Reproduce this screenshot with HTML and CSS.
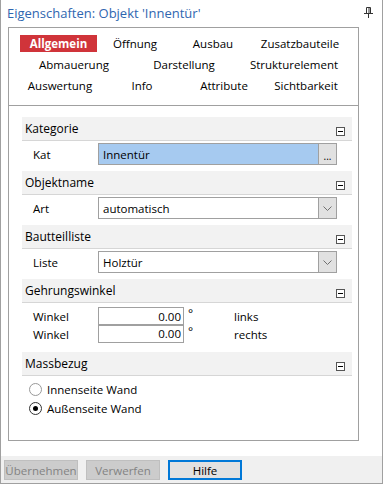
FILE: index.html
```html
<!DOCTYPE html>
<html lang="de">
<head>
<meta charset="utf-8">
<title>Eigenschaften</title>
<link rel="stylesheet" href="styles.css">
</head>
<body>
<div class="window">
  <div class="titlebar">
    <span class="title">Eigenschaften: Objekt 'Innentür'</span>
    <svg class="pin" width="9" height="11" viewBox="0 0 9 11">
      <path d="M2.5 0.5h4v6h-4z" fill="none" stroke="#333" stroke-width="1"/>
      <path d="M5 0.5v6" stroke="#333" stroke-width="1"/>
      <path d="M0 6.5h9" stroke="#333" stroke-width="1"/>
      <path d="M4.5 7v4" stroke="#333" stroke-width="1"/>
    </svg>
  </div>
  <div class="panel">
    <div class="tabs">
      <div class="tabrow r1">
        <span class="tab active">Allgemein</span>
        <span class="tab">Öffnung</span>
        <span class="tab">Ausbau</span>
        <span class="tab">Zusatzbauteile</span>
      </div>
      <div class="tabrow r2">
        <span class="tab">Abmauerung</span>
        <span class="tab">Darstellung</span>
        <span class="tab">Strukturelement</span>
      </div>
      <div class="tabrow r3">
        <span class="tab">Auswertung</span>
        <span class="tab">Info</span>
        <span class="tab">Attribute</span>
        <span class="tab">Sichtbarkeit</span>
      </div>
    </div>
    <div class="content">
      <div class="section">
        <div class="sechead"><span>Kategorie</span><i class="collapse"></i></div>
        <div class="row">
          <span class="label">Kat</span>
          <div class="field sel"><span class="val">Innentür</span><span class="btn dots">...</span></div>
        </div>
      </div>
      <div class="section">
        <div class="sechead"><span>Objektname</span><i class="collapse"></i></div>
        <div class="row">
          <span class="label">Art</span>
          <div class="field"><span class="val">automatisch</span><span class="btn"><svg width="9" height="5" viewBox="0 0 9 5"><path d="M0.5 0.5l4 4 4-4" fill="none" stroke="#707070" stroke-width="1"/></svg></span></div>
        </div>
      </div>
      <div class="section">
        <div class="sechead"><span>Bautteilliste</span><i class="collapse"></i></div>
        <div class="row">
          <span class="label">Liste</span>
          <div class="field"><span class="val">Holztür</span><span class="btn"><svg width="9" height="5" viewBox="0 0 9 5"><path d="M0.5 0.5l4 4 4-4" fill="none" stroke="#707070" stroke-width="1"/></svg></span></div>
        </div>
      </div>
      <div class="section">
        <div class="sechead"><span>Gehrungswinkel</span><i class="collapse"></i></div>
        <div class="angles">
          <div class="arow">
            <span class="label">Winkel</span>
            <span class="num">0.00</span>
            <span class="deg">°</span>
            <span class="side">links</span>
          </div>
          <div class="arow second">
            <span class="label">Winkel</span>
            <span class="num">0.00</span>
            <span class="deg">°</span>
            <span class="side">rechts</span>
          </div>
        </div>
      </div>
      <div class="section">
        <div class="sechead"><span>Massbezug</span><i class="collapse"></i></div>
        <div class="radios">
          <label class="radio"><span class="circle"></span>Innenseite Wand</label>
          <label class="radio"><span class="circle on"></span>Außenseite Wand</label>
        </div>
      </div>
    </div>
  </div>
  <div class="footer">
    <span class="button disabled">Übernehmen</span>
    <span class="button disabled">Verwerfen</span>
    <span class="button focus">Hilfe</span>
  </div>
</div>
</body>
</html>
```
FILE: styles.css
```css
* { box-sizing: border-box; }
html, body { margin: 0; padding: 0; background: #fff; }
body {
  font-family: "Open Sans", "Noto Sans", sans-serif;
  font-size: 11.5px;
  color: #000;
}
.window {
  width: 383px;
  height: 484px;
  border-left: 1px solid #a0a0a0;
  border-right: 1px solid #a0a0a0;
  border-bottom: 1px solid #a0a0a0;
  display: flex;
  flex-direction: column;
}
.titlebar {
  height: 27px;
  display: flex;
  align-items: center;
  justify-content: space-between;
  padding: 0 9px 1px 6px;
}
.title {
  color: #2f66b0;
  font-size: 13px;
}
.pin { margin-top: -2px; }
.panel {
  margin: 0 23px 0 7px;
  height: 414px;
  border: 1px solid #a0a0a0;
}
.tabs {
  height: 78px;
  border-bottom: 1px solid #a0a0a0;
  padding-top: 5px;
}
.tabrow {
  display: grid;
  height: 21px;
  align-items: center;
  justify-items: center;
}
.r1 { grid-template-columns: 77px 76px 80px 94px; padding-left: 11px; }
.r2 { grid-template-columns: 110px 110px 110px; padding-left: 10px; }
.r3 { grid-template-columns: 82px 82px 82px 82px; padding-left: 10px; }
.tab { white-space: nowrap; }
.tab.active {
  width: 77px;
  height: 17px;
  line-height: 17px;
  background: #d0343a;
  color: #fff;
  font-weight: bold;
  text-align: center;
}
.content {
  padding: 11px 6px 0 13px;
}
.sechead {
  height: 24px;
  background: #f2f2f2;
  border-bottom: 1px solid #d6d6d6;
  display: flex;
  justify-content: space-between;
  align-items: center;
  padding: 0 7px 0 3px;
  font-size: 12px;
}
.collapse {
  align-self: flex-end;
  margin-bottom: 4px;
  width: 9px;
  height: 9px;
  border: 1px solid #555;
  background: #fff;
  position: relative;
}
.collapse::after {
  content: "";
  position: absolute;
  left: 1px;
  right: 1px;
  top: 3px;
  height: 1px;
  background: #000;
}
.row {
  display: flex;
  align-items: center;
  padding: 2px 0 6px 0;
}
.label {
  width: 76px;
  padding-left: 11px;
}
.field {
  width: 239px;
  height: 22px;
  border: 1px solid #a0a0a0;
  background: #fff;
  display: flex;
  align-items: stretch;
}
.field.sel { background: #a6caf0; }
.val {
  flex: 1;
  padding-left: 4px;
  display: flex;
  align-items: center;
}
.btn {
  width: 18px;
  background: #e1e1e1;
  border-left: 1px solid #a0a0a0;
  display: flex;
  align-items: center;
  justify-content: center;
}
.btn.dots {
  align-items: flex-end;
  padding-bottom: 3px;
  font-size: 10px;
  line-height: 10px;
}
.angles {
  padding: 4px 0 9px 0;
}
.arow {
  display: flex;
  align-items: center;
  height: 18px;
}
.num {
  width: 86px;
  height: 19px;
  border: 1px solid #a0a0a0;
  text-align: right;
  padding-right: 2px;
  line-height: 17px;
  align-self: flex-start;
}
.arow.second .num { margin-top: -1px; }
.deg {
  width: 50px;
  padding-left: 4px;
  align-self: flex-start;
  font-size: 12px;
  line-height: 14px;
}
.radios {
  padding: 4px 0 0 7px;
  display: flex;
  flex-direction: column;
}
.radio {
  display: flex;
  align-items: center;
  height: 19px;
}
.circle {
  width: 13px;
  height: 13px;
  border-radius: 50%;
  border: 1px solid #999;
  background: #fff;
  margin-right: 5px;
  position: relative;
}
.circle.on { border-color: #333; }
.circle.on::after {
  content: "";
  position: absolute;
  left: 3px;
  top: 3px;
  width: 5px;
  height: 5px;
  border-radius: 50%;
  background: #000;
}
.footer {
  margin-top: auto;
  height: 27px;
  background: #f0f0f0;
  display: flex;
  gap: 8px;
  padding: 4px 3px 0 3px;
}
.button {
  width: 74px;
  height: 20px;
  display: flex;
  align-items: center;
  justify-content: center;
  border: 1px solid #adadad;
  background: #e1e1e1;
}
.button.disabled {
  background: #cccccc;
  border-color: #bfbfbf;
  color: #838383;
}
.button.focus {
  border: 2px solid #0078d7;
}
```
